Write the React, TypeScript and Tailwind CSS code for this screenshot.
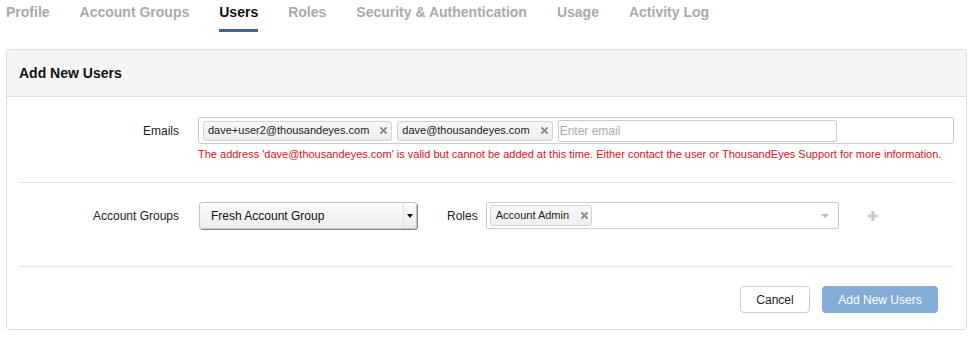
const tabs = ['Profile', 'Account Groups', 'Users', 'Roles', 'Security & Authentication', 'Usage', 'Activity Log'];

function RemoveX() {
  return (
    <svg width="7" height="7" viewBox="0 0 7 7" className="shrink-0" aria-hidden>
      <path d="M1 1L6 6M6 1L1 6" stroke="#8a8a8a" strokeWidth="1.8" strokeLinecap="round" />
    </svg>
  );
}

function Token({ label }: { label: string }) {
  return (
    <div className="flex h-[20px] items-center gap-[11px] rounded-[3px] border border-[#d4d4d4] bg-gradient-to-b from-[#f8f8f8] to-[#eeeeee] pl-[4px] pr-[4px] text-[11px] text-[#222]">
      <span>{label}</span>
      <RemoveX />
    </div>
  );
}

export default function App() {
  return (
    <div className="h-[338px] w-[972px] overflow-hidden bg-white font-['Liberation_Sans',Arial,sans-serif] text-[12px] text-[#222]">
      <nav className="flex gap-[30px] pl-[6px] pt-[2px]">
        {tabs.map((t) => (
          <div key={t} className="flex flex-col">
            <span className={`text-[14px] font-bold leading-[20px] ${t === 'Users' ? 'text-[#111]' : 'text-[#aaaaaa]'}`}>{t}</span>
            <span className={`mt-[7px] h-[3px] ${t === 'Users' ? 'bg-[#3b6590]' : ''}`} />
          </div>
        ))}
      </nav>

      <section className="ml-[6px] mr-[5px] mt-[17px] rounded-[4px] border border-[#dddddd]">
        <header className="flex h-[47px] items-center rounded-t-[4px] border-b border-[#dddddd] bg-[#f5f5f5] pl-[12px]">
          <h2 className="text-[14px] font-bold text-[#111]">Add New Users</h2>
        </header>

        <div className="px-[12px]">
          <div className="flex border-b border-[#e5e5e5] pb-[21px] pt-[20px]">
            <label className="w-[160px] pt-[7px] text-right leading-[14px]">Emails</label>
            <div className="ml-[19px] flex-1">
              <div className="flex h-[27px] items-center gap-[5px] rounded-[2px] border border-[#cccccc] pl-[4px]">
                <Token label="dave+user2@thousandeyes.com" />
                <Token label="dave@thousandeyes.com" />
                <div className="flex h-[22px] w-[279px] items-center rounded-[2px] border border-[#cccccc] pl-[1px] text-[12px] text-[#aaaaaa]">
                  Enter email
                </div>
              </div>
              <p className="mt-[3px] text-[11px] leading-[14px] text-[#d0161b]">
                The address 'dave@thousandeyes.com' is valid but cannot be added at this time. Either contact the user or ThousandEyes Support for more information.
              </p>
            </div>
          </div>

          <div className="flex items-center border-b border-[#e5e5e5] pb-[37px] pt-[19px]">
            <label className="w-[160px] text-right leading-[14px]">Account Groups</label>
            <div className="ml-[20px] flex h-[27px] w-[218px] items-center justify-between rounded-[3px] border border-[#c4c4c4] bg-gradient-to-b from-[#fbfbfb] to-[#ededed] pl-[11px] text-[12px] text-[#111] shadow-[1px_1px_0_#8a8a8a]">
              <span>Fresh Account Group</span>
              <span className="flex h-full w-[13px] items-center justify-center border-l border-[#e2e2e2]">
                <svg width="6" height="4" viewBox="0 0 6 4" aria-hidden>
                  <path d="M0 0H6L3 4Z" fill="#111" />
                </svg>
              </span>
            </div>
            <label className="ml-[30px] leading-[14px]">Roles</label>
            <div className="ml-[8px] flex h-[27px] w-[353px] items-center justify-between rounded-[2px] border border-[#cccccc] pl-[3px] pr-[9px]">
              <div className="flex h-[21px] items-center gap-[12px] rounded-[3px] border border-[#d4d4d4] bg-gradient-to-b from-[#f8f8f8] to-[#eeeeee] pl-[5px] pr-[3px] text-[11px] text-[#222]">
                <span>Account Admin</span>
                <RemoveX />
              </div>
              <svg width="8" height="4" viewBox="0 0 8 4" aria-hidden>
                <path d="M0 0H8L4 4Z" fill="#bbbbbb" />
              </svg>
            </div>
            <svg width="10" height="10" viewBox="0 0 10 10" className="ml-[29px]" aria-hidden>
              <path d="M5 0V10M0 5H10" stroke="#c8ccd0" strokeWidth="3" />
            </svg>
          </div>

          <div className="flex justify-end gap-[12px] pb-[16px] pr-[16px] pt-[19px]">
            <button className="h-[27px] w-[70px] rounded-[4px] border border-[#cccccc] bg-white text-[12px] text-[#222]">Cancel</button>
            <button className="h-[27px] w-[116px] rounded-[4px] bg-[#83acd7] text-[12px] text-white">Add New Users</button>
          </div>
        </div>
      </section>
    </div>
  );
}
